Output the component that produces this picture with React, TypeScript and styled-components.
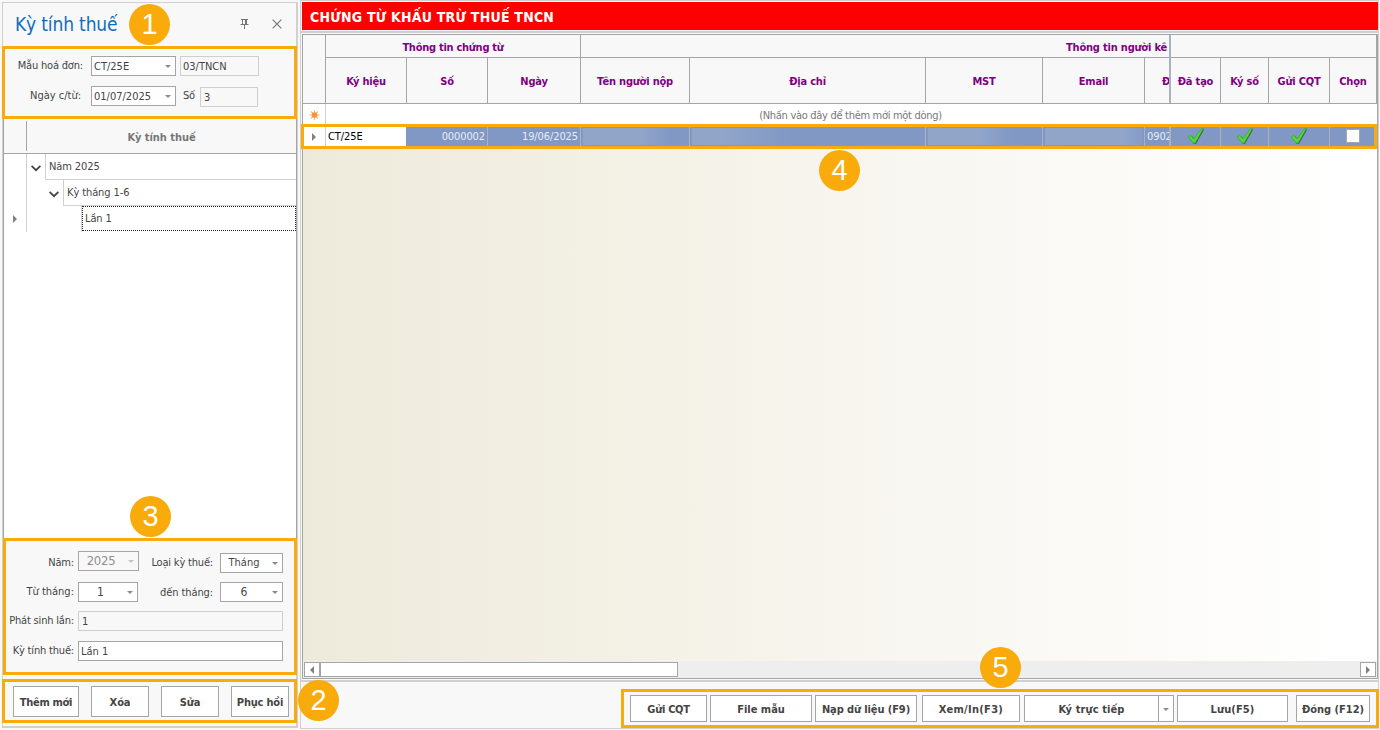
import React from "react";
import styled, { createGlobalStyle, css } from "styled-components";

const Global = createGlobalStyle`
  * { box-sizing: border-box; }
  body {
    margin: 0;
    background: #f8f8f8;
    font-family: "DejaVu Sans Condensed", "DejaVu Sans", sans-serif;
    font-stretch: condensed;
    font-size: 11px;
    color: #444;
  }
`;

const ORANGE = "#f8ab0a";
const LINE = "#a5a5a5";
const SOFT = "#d0d0d0";

const Text = styled.span<{ $ls?: number; $size?: number }>`
  white-space: nowrap;
  ${(p) => p.$ls !== undefined && `letter-spacing: ${p.$ls}px;`}
  ${(p) => p.$size && `font-size: ${p.$size}px;`}
`;

const Page = styled.div`
  position: relative;
  display: flex;
  width: 1380px;
  height: 730px;
  overflow: hidden;
  background: #f8f8f8;
`;

/* ---------- left dock panel ---------- */
const Side = styled.aside`
  display: flex;
  flex-direction: column;
  width: 296px;
  height: 726px;
  margin: 2px 2px 0 2px;
  padding-bottom: 3px;
  border: 1px solid ${SOFT};
  border-right-width: 2px;
  border-bottom-width: 2px;
  flex: none;
`;

const SideTitle = styled.header`
  display: flex;
  align-items: center;
  height: 43px;
  padding: 0 14px 2px 12px;
  flex: none;
  color: #0f6cbd;
`;

const Spacer = styled.div`
  flex: 1;
`;

const Gap = styled.div<{ $h: number }>`
  flex: none;
  height: ${(p) => p.$h}px;
`;

const Framed = styled.section<{ $h: number; $l?: number }>`
  flex: none;
  height: ${(p) => p.$h}px;
  margin-left: ${(p) => p.$l ?? -1}px;
  margin-right: -1px;
  border: 3px solid ${ORANGE};
`;

const Line = styled.div<{ $top: number }>`
  display: flex;
  margin-top: ${(p) => p.$top}px;
  height: 20px;
  align-items: center;
`;

const Caption = styled.label<{ $w: number; $gap: number; $drop?: boolean }>`
  width: ${(p) => p.$w}px;
  padding-right: ${(p) => p.$gap}px;
  flex: none;
  display: flex;
  justify-content: flex-end;
  letter-spacing: -0.18px;
  line-height: 20px;
  margin-top: ${(p) => (p.$drop ? 2 : 0)}px;
`;

const Box = styled.div<{ $w: number; $ml?: number; $ro?: boolean; $dy?: number; $pad?: number; $dark?: boolean }>`
  display: flex;
  align-items: center;
  flex: none;
  width: ${(p) => p.$w}px;
  height: 20px;
  margin-left: ${(p) => p.$ml ?? 0}px;
  margin-top: ${(p) => (p.$dy ?? 0) * 2}px;
  padding-left: ${(p) => p.$pad ?? 2}px;
  border: 1px solid ${(p) => (p.$ro && !p.$dark ? "#cfcfcf" : LINE)};
  background: ${(p) => (p.$ro ? "#f8f8f8" : "#fff")};
`;

const Value = styled.div<{ $center?: boolean; $dim?: boolean }>`
  flex: 1;
  padding-right: ${(p) => (p.$center ? 7 : 0)}px;
  text-align: ${(p) => (p.$center ? "center" : "left")};
  color: ${(p) => (p.$dim ? "#8f8f8f" : "inherit")};
  line-height: 18px;
  padding-top: ${(p) => (p.$center ? 0 : 1)}px;
`;

const Caret = styled.i<{ $dim?: boolean; $bare?: boolean }>`
  width: 0;
  height: 0;
  margin-right: ${(p) => (p.$bare ? 0 : 4)}px;
  border: 3px solid transparent;
  border-top-color: ${(p) => (p.$dim ? "#c4c4c4" : "#8a8a8a")};
  border-bottom: 0;
`;

const Tree = styled.div`
  flex: 1;
  display: flex;
  flex-direction: column;
  background: #fff;
  border-left: 1px solid ${LINE};
  border-right: 1px solid ${LINE};
  margin-right: -1px;
`;

const TreeHead = styled.div`
  display: flex;
  height: 35px;
  flex: none;
  background: #f8f8f8;
  border-bottom: 1px solid ${LINE};
  font-weight: bold;
  color: #777;
`;

const TreeHeadGutter = styled.div`
  width: 23px;
  height: 30px;
  margin-top: 2px;
  border-right: 1px solid ${LINE};
`;

const TreeHeadTitle = styled.div`
  flex: 1;
  text-align: center;
  line-height: 38px;
  letter-spacing: -0.05px;
`;

const TreeRow = styled.div`
  display: flex;
  height: 26px;
`;

const Gutter = styled.div`
  display: flex;
  align-items: center;
  justify-content: center;
  width: 23px;
  border-right: 1px solid ${SOFT};
`;

const Expander = styled.div<{ $indent: number }>`
  display: flex;
  align-items: center;
  justify-content: flex-end;
  width: ${(p) => p.$indent}px;
  padding: 3px 4px 0 0;
`;

const TreeCell = styled.div<{ $focus?: boolean }>`
  flex: 1;
  padding-left: 3px;
  line-height: 26px;
  letter-spacing: -0.1px;
  border-left: 1px solid ${SOFT};
  border-bottom: 1px solid ${SOFT};
  ${(p) =>
    p.$focus &&
    css`
      padding-left: 0;
      border-bottom: 0;
    `}
`;

const FocusBox = styled.div`
  height: 25px;
  padding-left: 2px;
  line-height: 24px;
  border: 1px dotted #222;
`;

const Actions = styled.div`
  display: flex;
  padding: 4px 0 0 8px;
`;

const Button = styled.button<{ $w: number; $h: number; $ml?: number; $ls?: number }>`
  display: flex;
  align-items: center;
  justify-content: center;
  flex: none;
  width: ${(p) => p.$w}px;
  height: ${(p) => p.$h}px;
  margin: 0 0 0 ${(p) => p.$ml ?? 0}px;
  padding: 1px 0 0;
  border: 1px solid ${LINE};
  background: #fff;
  color: #444;
  font: inherit;
  font-weight: bold;
  font-stretch: condensed;
  letter-spacing: ${(p) => p.$ls ?? -0.1}px;
`;

/* ---------- main panel ---------- */
const Main = styled.main`
  display: flex;
  flex-direction: column;
  width: 1079px;
  height: 729px;
  border: 1px solid ${SOFT};
`;

const Banner = styled.h1`
  height: 28px;
  margin: 1px 0 1px 1px;
  padding-left: 8px;
  flex: none;
  background: #f00;
  color: #fff;
  font-size: 14px;
  line-height: 30px;
  letter-spacing: 0.22px;
`;

const Divider = styled.div`
  height: 2px;
  flex: none;
  background: ${SOFT};
`;

const Grid = styled.div`
  display: flex;
  flex-direction: column;
  width: 1076px;
  height: 645px;
  margin: 1px 0 1px 1px;
  border: 1px solid ${LINE};
  flex: none;
`;

const GridHead = styled.div`
  display: flex;
  height: 69px;
  flex: none;
  color: #800080;
  font-weight: bold;
  letter-spacing: -0.2px;
  border-bottom: 1px solid ${LINE};
`;

const HeadGutter = styled.div`
  width: 23px;
  border-right: 1px solid ${LINE};
`;

const Band = styled.div<{ $w: number; $fixed?: boolean }>`
  width: ${(p) => p.$w}px;
  flex: none;
  overflow: hidden;
  border-right: ${(p) => (p.$fixed ? "2px solid #a9b3bd" : `1px solid ${LINE}`)};
`;

const BandTitle = styled.div<{ $indent?: number }>`
  height: 23px;
  border-bottom: 1px solid ${LINE};
  text-align: ${(p) => (p.$indent ? "left" : "center")};
  line-height: 25px;
  white-space: nowrap;
  padding-left: ${(p) => p.$indent ?? 0}px;
`;

const BandCols = styled.div`
  display: flex;
  height: 45px;
`;

const HeadCell = styled.div<{ $w: number; $last?: boolean; $right?: boolean }>`
  flex: none;
  width: ${(p) => p.$w}px;
  text-align: ${(p) => (p.$right ? "right" : "center")};
  line-height: 48px;
  border-right: ${(p) => (p.$last ? 0 : 1)}px solid ${LINE};
`;

const NewRow = styled.div`
  display: flex;
  height: 21px;
  flex: none;
  background: #fff;
  color: #777;
`;

const NewHint = styled.div`
  flex: 1;
  padding-right: 2px;
  text-align: center;
  line-height: 24px;
  letter-spacing: -0.3px;
`;

const DataRow = styled.div`
  display: flex;
  height: 24px;
  flex: none;
  background: #8098c3;
  color: #e8ecf4;
`;

const RowGutter = styled(Gutter)`
  background: #fff;
  flex: none;
`;

const Cell = styled.div<{ $w: number; $edit?: boolean; $align?: string; $fixed?: boolean }>`
  display: flex;
  align-items: center;
  justify-content: ${(p) => p.$align ?? "flex-start"};
  flex: none;
  overflow: hidden;
  width: ${(p) => p.$w}px;
  padding: 0 2px 1px;
  border-right: ${(p) => (p.$fixed ? 2 : 1)}px solid #a9b3bd;
  letter-spacing: -0.1px;
  ${(p) => p.$edit && "background: #fff; color: #000; border-right-color: #8098c3;"}
`;

const Smudge = styled.div<{ $fade: number }>`
  flex: 1;
  height: 17px;
  background: linear-gradient(to right, #91a5c9, #91a5c9 ${(p) => p.$fade - 30}%, #8098c3 ${(p) => p.$fade}%);
`;

const Checkbox = styled.div`
  width: 14px;
  height: 14px;
  margin-bottom: 1px;
  border: 1px solid #a7a7a7;
  background: #fff;
`;

const Empty = styled.div`
  flex: 1;
  background: linear-gradient(to right, #eeeadb, #f4f1e6 33%, #f8f6f0 55%, #fff 98%);
`;

const ScrollTrack = styled.div`
  display: flex;
  align-items: center;
  height: 17px;
  padding: 0 1px;
  flex: none;
  background: #eee;
`;

const ScrollPart = styled.div<{ $w: number }>`
  display: flex;
  align-items: center;
  justify-content: center;
  width: ${(p) => p.$w}px;
  height: 15px;
  border: 1px solid ${LINE};
  background: #fff;
`;

const Footer = styled.footer`
  display: flex;
  margin: 7px 0 0 320px;
  width: 758px;
  height: 39px;
  padding: 3px 0 0 6px;
  border: 3px solid ${ORANGE};
`;

/* ---------- overlays ---------- */
const RowFrame = styled.div`
  position: absolute;
  left: 301px;
  top: 124px;
  width: 1076px;
  height: 25px;
  border: 3px solid ${ORANGE};
`;

const Badge = styled.div<{ $x: number; $y: number }>`
  position: absolute;
  left: ${(p) => p.$x}px;
  top: ${(p) => p.$y}px;
  width: 41px;
  height: 41px;
  border-radius: 50%;
  background: ${ORANGE};
  color: #fff;
  font: 29px/41px "Liberation Sans", Arial, sans-serif;
  text-align: center;
`;

const Chevron = () => (
  <svg width="10" height="7" viewBox="0 0 10 7" fill="none" stroke="#444" strokeWidth="1.7">
    <path d="M0.6 0.8 5 5.2 9.4 0.8" />
  </svg>
);

const Marker = ({ left = false }: { left?: boolean }) => (
  <svg width="4" height="8" viewBox="0 0 4 8" fill="#808080">
    <path d={left ? "M4 0V8L0 4Z" : "M0 0V8L4 4Z"} />
  </svg>
);

const TickIcon = styled.svg`
  margin-top: -2px;
`;

const Tick = () => (
  <TickIcon width="18" height="18" viewBox="0 0 18 18">
    <path d="M2.2 10.4 4.9 9 7.7 12.3 15.6 2.2 17.2 2.6 9 16.8 6.8 16.8Z" fill="#3f5f55" />
    <path d="M1.2 9.8 4 8.6 7 12 14.6 1.6 16.4 1.6 8.2 16 6.2 16Z" fill="#4fdc35" stroke="#34a32e" strokeWidth=".6" />
  </TickIcon>
);

const Star = () => (
  <svg width="11" height="10" viewBox="0 0 11 10" stroke="#fbb67a" strokeWidth="1.1">
    <path d="M5.5 0V10M.5 5H10.5M2 1.5 9 8.5M9 1.5 2 8.5" />
    <circle cx="5.5" cy="5" r="2.8" fill="#f99436" stroke="none" />
  </svg>
);

const Pin = () => (
  <svg width="9" height="10" viewBox="0 0 9 10" fill="none" stroke="#777">
    <path d="M1 .5H8M2.5 .5V5M6.5 .5V5M5.5 1V5M.5 5.5H8.5M4.5 6V10" />
  </svg>
);

const Close = () => (
  <svg width="10" height="10" viewBox="0 0 10 10" fill="none" stroke="#777" strokeWidth="1.2">
    <path d="M.7 .7 9.3 9.3M9.3 .7 .7 9.3" />
  </svg>
);

const IconSlot = styled.div<{ $ml: number }>`
  display: flex;
  margin-left: ${(p) => p.$ml}px;
`;

export default function App() {
  return (
    <Page>
      <Global />
      <Side>
        <SideTitle>
          <Text $size={19} $ls={-0.15}>Kỳ tính thuế</Text>
          <Spacer />
          <Pin />
          <IconSlot $ml={23}>
            <Close />
          </IconSlot>
        </SideTitle>
        <Framed $h={73}>
          <Line $top={7}>
            <Caption $w={86} $gap={8}><Text>Mẫu hoá đơn:</Text></Caption>
            <Box $w={85}><Value><Text>CT/25E</Text></Value><Caret /></Box>
            <Box $w={79} $ml={4} $ro><Text>03/TNCN</Text></Box>
          </Line>
          <Line $top={10}>
            <Caption $w={86} $gap={10}><Text $ls={0}>Ngày c/từ:</Text></Caption>
            <Box $w={85}><Value><Text>01/07/2025</Text></Value><Caret /></Box>
            <Caption $w={24} $gap={5}><Text>Số</Text></Caption>
            <Box $w={58} $ro $dy={1} $pad={3}><Text>3</Text></Box>
          </Line>
        </Framed>
        <Tree>
          <TreeHead>
            <TreeHeadGutter />
            <TreeHeadTitle><Text>Kỳ tính thuế</Text></TreeHeadTitle>
          </TreeHead>
          <TreeRow>
            <Gutter />
            <Expander $indent={18}><Chevron /></Expander>
            <TreeCell><Text>Năm 2025</Text></TreeCell>
          </TreeRow>
          <TreeRow>
            <Gutter />
            <Expander $indent={36}><Chevron /></Expander>
            <TreeCell><Text>Kỳ tháng 1-6</Text></TreeCell>
          </TreeRow>
          <TreeRow>
            <Gutter><Marker /></Gutter>
            <Expander $indent={54} />
            <TreeCell $focus><FocusBox><Text>Lần 1</Text></FocusBox></TreeCell>
          </TreeRow>
        </Tree>
        <Framed $h={137} $l={0}>
          <Line $top={11}>
            <Caption $w={72} $gap={4} $drop><Text>Năm:</Text></Caption>
            <Box $w={61} $ro $dark $dy={-1}><Value $center $dim><Text $size={13} $ls={-0.3}>2025</Text></Value><Caret $dim /></Box>
            <Caption $w={81} $gap={7} $drop><Text>Loại kỳ thuế:</Text></Caption>
            <Box $w={63} $dy={1}><Value $center><Text>Tháng</Text></Value><Caret /></Box>
          </Line>
          <Line $top={10}>
            <Caption $w={72} $gap={4}><Text $ls={0}>Từ tháng:</Text></Caption>
            <Box $w={60}><Value $center><Text $size={12}>1</Text></Value><Caret /></Box>
            <Caption $w={82} $gap={7} $drop><Text $ls={-0.1}>đến tháng:</Text></Caption>
            <Box $w={63}><Value $center><Text $size={12}>6</Text></Value><Caret /></Box>
          </Line>
          <Line $top={9}>
            <Caption $w={72} $gap={4}><Text>Phát sinh lần:</Text></Caption>
            <Box $w={205} $ro $pad={3}><Text>1</Text></Box>
          </Line>
          <Line $top={10}>
            <Caption $w={72} $gap={4}><Text>Kỳ tính thuế:</Text></Caption>
            <Box $w={205}><Text>Lần 1</Text></Box>
          </Line>
        </Framed>
        <Gap $h={4} />
        <Framed $h={44}>
          <Actions>
            <Button $w={66} $h={31} $ls={-0.3}>Thêm mới</Button>
            <Button $w={58} $h={31} $ml={12}>Xóa</Button>
            <Button $w={58} $h={31} $ml={12}>Sửa</Button>
            <Button $w={58} $h={31} $ml={12} $ls={-0.2}>Phục hồi</Button>
          </Actions>
        </Framed>
      </Side>

      <Main>
        <Banner><Text>CHỨNG TỪ KHẤU TRỪ THUẾ TNCN</Text></Banner>
        <Divider />
        <Grid>
          <GridHead>
            <HeadGutter />
            <Band $w={255}>
              <BandTitle><Text $ls={-0.27}>Thông tin chứng từ</Text></BandTitle>
              <BandCols>
                <HeadCell $w={81}><Text>Ký hiệu</Text></HeadCell>
                <HeadCell $w={81}><Text>Số</Text></HeadCell>
                <HeadCell $w={92} $last><Text>Ngày</Text></HeadCell>
              </BandCols>
            </Band>
            <Band $w={590} $fixed>
              <BandTitle $indent={485}><Text>Thông tin người kê</Text></BandTitle>
              <BandCols>
                <HeadCell $w={109}><Text>Tên người nộp</Text></HeadCell>
                <HeadCell $w={236}><Text>Địa chỉ</Text></HeadCell>
                <HeadCell $w={117}><Text>MST</Text></HeadCell>
                <HeadCell $w={102}><Text>Email</Text></HeadCell>
                <HeadCell $w={25} $last $right><Text>Đ</Text></HeadCell>
              </BandCols>
            </Band>
            <Band $w={206}>
              <BandTitle />
              <BandCols>
                <HeadCell $w={50}><Text>Đã tạo</Text></HeadCell>
                <HeadCell $w={48}><Text>Ký số</Text></HeadCell>
                <HeadCell $w={61}><Text>Gửi CQT</Text></HeadCell>
                <HeadCell $w={46} $last><Text>Chọn</Text></HeadCell>
              </BandCols>
            </Band>
          </GridHead>
          <NewRow>
            <RowGutter><Star /></RowGutter>
            <NewHint><Text>(Nhấn vào đây để thêm mới một dòng)</Text></NewHint>
          </NewRow>
          <DataRow>
            <RowGutter><Marker /></RowGutter>
            <Cell $w={81} $edit><Text>CT/25E</Text></Cell>
            <Cell $w={81} $align="flex-end"><Text>0000002</Text></Cell>
            <Cell $w={93} $align="flex-end"><Text>19/06/2025</Text></Cell>
            <Cell $w={109}><Smudge $fade={85} /></Cell>
            <Cell $w={236}><Smudge $fade={42} /></Cell>
            <Cell $w={117}><Smudge $fade={75} /></Cell>
            <Cell $w={102}><Smudge $fade={110} /></Cell>
            <Cell $w={26} $fixed><Text>0902</Text></Cell>
            <Cell $w={50} $align="center"><Tick /></Cell>
            <Cell $w={48} $align="center"><Tick /></Cell>
            <Cell $w={61} $align="center"><Tick /></Cell>
            <Cell $w={47} $align="center"><Checkbox /></Cell>
          </DataRow>
          <Empty />
          <ScrollTrack>
            <ScrollPart $w={16}><Marker left /></ScrollPart>
            <ScrollPart $w={358} />
            <Spacer />
            <ScrollPart $w={16}><Marker /></ScrollPart>
          </ScrollTrack>
        </Grid>
        <Divider />
        <Footer>
          <Button $w={77} $h={27} $ls={-0.3}>Gửi CQT</Button>
          <Button $w={102} $h={27} $ml={3} $ls={0}>File mẫu</Button>
          <Button $w={102} $h={27} $ml={3}>Nạp dữ liệu (F9)</Button>
          <Button $w={98} $h={27} $ml={5} $ls={0.3}>Xem/In(F3)</Button>
          <Button $w={135} $h={27} $ml={4} $ls={0.1}>Ký trực tiếp</Button>
          <Button $w={16} $h={27} $ml={-1}><Caret $bare /></Button>
          <Button $w={111} $h={27} $ml={3} $ls={0.1}>Lưu(F5)</Button>
          <Button $w={74} $h={27} $ml={8} $ls={0}>Đóng (F12)</Button>
        </Footer>
      </Main>

      <RowFrame />
      <Badge $x={129} $y={4}>1</Badge>
      <Badge $x={298} $y={680}>2</Badge>
      <Badge $x={130} $y={496}>3</Badge>
      <Badge $x={819} $y={150}>4</Badge>
      <Badge $x={980} $y={647}>5</Badge>
    </Page>
  );
}
